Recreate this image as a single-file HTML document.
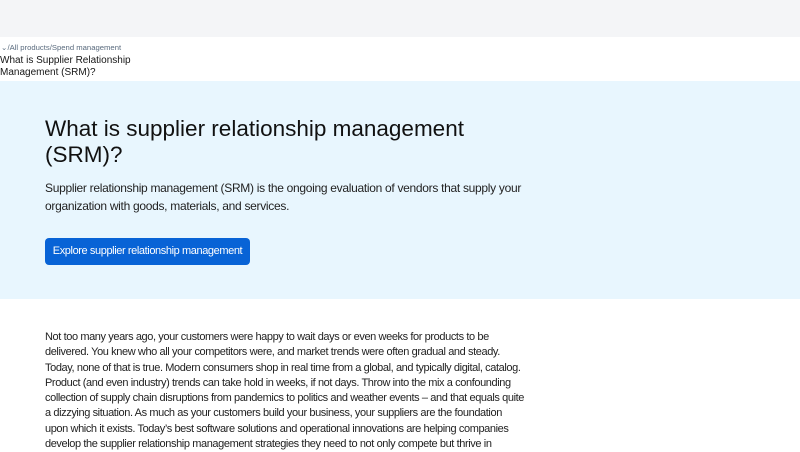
<!DOCTYPE html>
<html><head><meta charset="utf-8"><style>
*{margin:0;padding:0;box-sizing:border-box}
body{width:800px;height:450px;overflow:hidden;font-family:"Liberation Sans",Arial,sans-serif;background:#fff;color:#161616}
.top{height:37px;background:#f4f5f7}
.crumb{position:absolute;top:43px;left:1px;font-size:7.7px;color:#5a6b7e;white-space:nowrap}
.sub{position:absolute;top:55px;left:0;font-size:10px;line-height:12px;color:#161616}
.hero{position:absolute;top:81px;left:0;width:800px;height:218px;background:#e8f6fe}
h1{position:absolute;top:116px;left:45px;font-size:22.5px;font-weight:400;line-height:26px;width:480px;color:#111}
.lead{position:absolute;top:179px;left:45px;width:480px;font-size:12px;letter-spacing:-0.3px;line-height:18px;color:#222}
.btn{position:absolute;top:238px;left:45px;width:205px;height:27px;background:#0863d6;border-radius:4px;color:#fff;font-size:11px;letter-spacing:-0.4px;line-height:27px;text-align:center;white-space:nowrap}
.body{position:absolute;top:330px;left:45px;font-size:11px;letter-spacing:-0.4px;line-height:15.3px;color:#222;white-space:nowrap}
</style></head><body>
<div class="top"></div>
<div class="crumb">⌄/All products/Spend management</div>
<div class="sub">What is Supplier Relationship<br>Management (SRM)?</div>
<div class="hero"></div>
<h1>What is supplier relationship management (SRM)?</h1>
<div class="lead">Supplier relationship management (SRM) is the ongoing evaluation of vendors that supply your organization with goods, materials, and services.</div>
<div class="btn">Explore supplier relationship management</div>
<div class="body">Not too many years ago, your customers were happy to wait days or even weeks for products to be<br>delivered. You knew who all your competitors were, and market trends were often gradual and steady.<br>Today, none of that is true. Modern consumers shop in real time from a global, and typically digital, catalog.<br>Product (and even industry) trends can take hold in weeks, if not days. Throw into the mix a confounding<br>collection of supply chain disruptions from pandemics to politics and weather events – and that equals quite<br>a dizzying situation. As much as your customers build your business, your suppliers are the foundation<br>upon which it exists. Today’s best software solutions and operational innovations are helping companies<br>develop the supplier relationship management strategies they need to not only compete but thrive in</div>
</body></html>
